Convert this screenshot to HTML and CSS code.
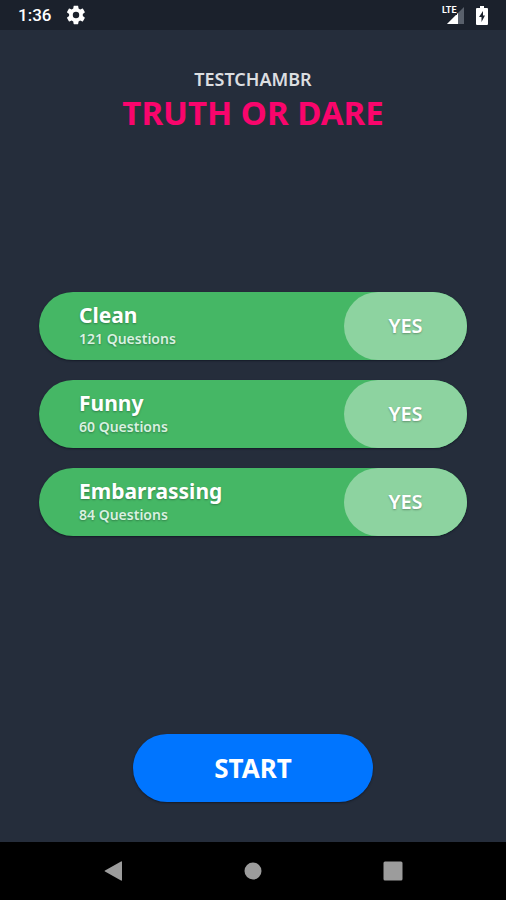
FILE: index.html
```html
<!DOCTYPE html>
<html lang="en">
<head>
<meta charset="utf-8">
<meta name="viewport" content="width=device-width, initial-scale=1">
<title>Truth or Dare</title>
<link rel="stylesheet" href="styles.css">
</head>
<body>
<header class="status">
  <div class="status-group clock">
    <span class="time">1:36</span>
    <svg class="gear" viewBox="0 0 24 24" aria-hidden="true"><path fill-rule="evenodd" d="M19.4 13a7.500 7.500 0 0 0 0-2l2.100-1.600c.2-.2.3-.5.1-.7l-2-3.400c-.1-.3-.4-.3-.6-.3l-2.500 1a7.300 7.300 0 0 0-1.700-1L14.400 2.400c0-.2-.2-.4-.5-.4h-4c-.2 0-.4.2-.5.4L9 5a7.700 7.700 0 0 0-1.700 1l-2.500-1c-.2-.1-.5 0-.6.200l-2 3.500c-.1.200 0 .5.100.6L4.500 11a8 8 0 0 0 0 2l-2.200 1.600c-.1.200-.2.500-.1.700l2 3.400c.1.300.4.300.6.300l2.500-1a7.300 7.300 0 0 0 1.700 1l.4 2.600c0 .2.200.4.500.4h4c.2 0 .5-.2.500-.4l.4-2.600a7.700 7.700 0 0 0 1.700-1l2.500 1c.2.100.5 0 .6-.2l2-3.500c.1-.2 0-.5-.1-.6zM12 15.500a3.500 3.500 0 1 1 0-7 3.500 3.500 0 0 1 0 7z"/></svg>
  </div>
  <div class="status-group">
    <div class="signal">
      <svg viewBox="0 0 17 17" aria-hidden="true"><path class="dim" d="M17 0v17H0z"/><path d="M11 6v11H0z"/></svg>
      <span class="lte">LTE</span>
    </div>
    <svg class="battery" viewBox="0 0 12 19" aria-hidden="true"><path d="M4 0h4v2h3q1 0 1 1v15q0 1-1 1H1q-1 0-1-1V3q0-1 1-1h3z"/><path class="bolt" d="M7 5L3 11h2.500v5L9 9.500H7z"/></svg>
  </div>
</header>
<main class="screen">
  <div class="heading">
    <p class="brand">TESTCHAMBR</p>
    <h1 class="title">TRUTH OR DARE</h1>
  </div>
  <div class="categories">
    <button class="category" type="button" aria-pressed="true">
      <span class="info"><span class="name">Clean</span><span class="count">121 Questions</span></span>
      <span class="answer">YES</span>
    </button>
    <button class="category" type="button" aria-pressed="true">
      <span class="info"><span class="name">Funny</span><span class="count">60 Questions</span></span>
      <span class="answer">YES</span>
    </button>
    <button class="category" type="button" aria-pressed="true">
      <span class="info"><span class="name">Embarrassing</span><span class="count">84 Questions</span></span>
      <span class="answer">YES</span>
    </button>
  </div>
  <button class="start" type="button">START</button>
</main>
<nav class="system">
  <button type="button" aria-label="Back"><svg viewBox="0 0 20 20"><path d="M19 1v18q0 1-1 .5L2 10.500q-1-.5 0-1L18 .5q1-.5 1 .5z"/></svg></button>
  <button type="button" aria-label="Home"><svg viewBox="0 0 20 20"><circle cx="10" cy="10" r="8.500"/></svg></button>
  <button type="button" aria-label="Overview"><svg viewBox="0 0 20 20"><rect x=".5" y=".5" width="19" height="19" rx="1.500"/></svg></button>
</nav>
</body>
</html>
```
FILE: styles.css
```css
* {
  box-sizing: border-box;
}

body {
  margin: 0;
  min-height: 100vh;
  display: flex;
  flex-direction: column;
  background: #252d3b;
  color: #fff;
  font-family: "Noto Sans", "Open Sans", sans-serif;
}

button {
  border: 0;
  padding: 0;
  color: inherit;
  font: inherit;
  cursor: pointer;
}

svg {
  display: block;
  fill: #fff;
}

.status {
  display: flex;
  justify-content: space-between;
  height: 30px;
  padding: 0 18px;
  background: #1b212c;
}

.status-group {
  display: flex;
  align-items: center;
  gap: 12px;
}

.clock {
  gap: 14px;
}

.time {
  font: 500 17px/30px Roboto, sans-serif;
}

.gear {
  width: 22px;
  height: 22px;
}

.signal {
  position: relative;
  padding-left: 5px;
}

.signal svg {
  width: 17px;
  height: 17px;
}

.signal .dim {
  fill: #59606b;
}

.lte {
  position: absolute;
  top: -2px;
  left: 0;
  background: #1b212c;
  font: 700 9px/10px "Liberation Sans Narrow", Roboto, sans-serif;
}

.battery {
  width: 12px;
  height: 19px;
}

.battery .bolt {
  fill: #1b212c;
}

.screen {
  flex: 1;
  display: flex;
  flex-direction: column;
  justify-content: space-between;
  padding: 39px 39px 40px;
}

.heading {
  display: flex;
  flex-direction: column;
  gap: 2px;
  text-align: center;
}

.brand {
  margin: 0;
  color: #dcdee0;
  font-size: 18px;
  font-weight: 600;
  line-height: 20px;
}

.title {
  margin: 0;
  color: #f9056c;
  font-size: 33px;
  font-weight: 700;
  line-height: 44px;
}

.categories {
  display: flex;
  flex-direction: column;
  gap: 20px;
  padding-bottom: 42px;
}

.category {
  display: flex;
  justify-content: space-between;
  height: 68px;
  padding-left: 40px;
  border-radius: 34px;
  background: #45b765;
  box-shadow: 0 1px 2px #151b28;
  text-align: left;
  text-shadow: 0 1px 2px rgba(0, 0, 0, 0.3);
}

.info {
  display: flex;
  flex-direction: column;
  align-self: center;
}

.name {
  font-size: 21px;
  font-weight: 700;
  line-height: 26px;
}

.count {
  color: #d9f1e0;
  font-size: 14px;
  font-weight: 600;
  line-height: 22px;
}

.answer {
  flex: 0 0 123px;
  border-radius: 34px;
  background: #8dd3a0;
  font-size: 20px;
  font-weight: 600;
  line-height: 68px;
  text-align: center;
}

.start {
  align-self: center;
  width: 56%;
  height: 68px;
  border-radius: 34px;
  background: #0075ff;
  box-shadow: 0 1px 2px #151b28;
  font-size: 26px;
  font-weight: 700;
}

.system {
  display: flex;
  justify-content: center;
  align-items: center;
  gap: 120px;
  height: 58px;
  background: #000;
}

.system button {
  background: none;
}

.system svg {
  width: 20px;
  height: 20px;
  fill: #9c9c9c;
}
```
